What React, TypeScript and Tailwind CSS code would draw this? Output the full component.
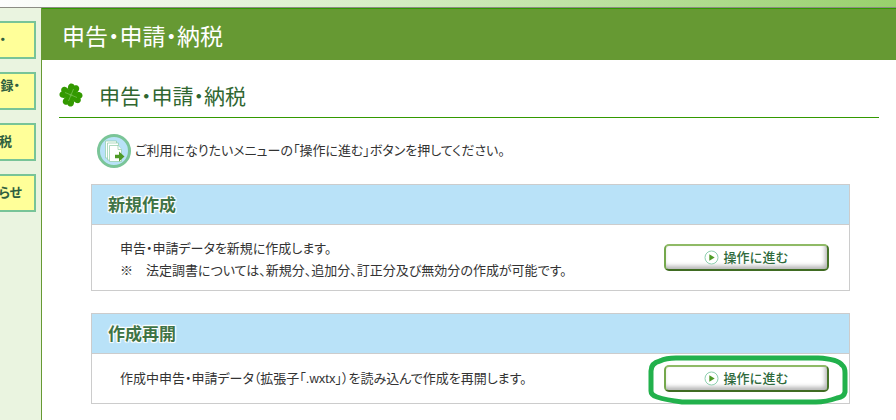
import React from "react";

interface MenuPanelProps {
  title: string;
  lines: string[];
  spacing: string;
  marked?: boolean;
}

const navItems = [
  { label: "・", place: "items-center pr-7" },
  { label: "録・", place: "items-start pt-1 pr-[14px]" },
  { label: "税", place: "items-center pr-[22px]" },
  { label: "らせ", place: "items-center pr-3" },
];

const CloverIcon: React.FC = () => (
  <svg width="24" height="26" viewBox="0 0 24 26" aria-hidden="true">
    <g fill="#339900">
      {[20, 110, 200, 290].map((angle) => (
        <path
          key={angle}
          d="M12 13C9.500 11 6 8.500 6.300 5C6.500 1.800 10.300 .800 12 3C13.700 .800 17.500 1.800 17.700 5C18 8.500 14.500 11 12 13Z"
          transform={`rotate(${angle} 12 13)`}
        />
      ))}
    </g>
    <path d="M14.500 7 9.500 19M6 10.500l12 5" stroke="#7cc35a" strokeWidth="0.700" fill="none" />
  </svg>
);

const DocumentsIcon: React.FC = () => (
  <svg width="34" height="34" viewBox="0 0 34 34" aria-hidden="true">
    <circle cx="17" cy="17" r="15.500" fill="#b9e2f8" stroke="#7ac598" strokeWidth="3" />
    <g fill="#fff" stroke="#8ccba5" strokeWidth="0.700">
      <path d="M8.500 7h11v17h-11z" />
      <path d="M10.500 9h11v17h-11z" />
      <path d="M12.500 11.500h8.500l3.500 4v12H12.500z" />
      <path d="M21 11.500v4h3.500" />
    </g>
    <path d="M18 20.800h4v-3.300l5.500 5-5.500 5v-3.300h-4z" fill="#4e9a26" />
  </svg>
);

const ProceedButton: React.FC = () => (
  <button
    type="button"
    className="flex h-[27px] w-[165px] cursor-pointer items-center justify-center gap-1 rounded-[5px] border-2 border-t-[#8fba66] border-r-[#47742a] border-b-[#3f6b22] border-l-[#74a84c] bg-white text-[13px] leading-5 font-medium text-[#2f6a3c] shadow-[inset_-2px_-3px_4px_#b5b5b5]"
  >
    <svg width="15" height="15" viewBox="0 0 15 15" aria-hidden="true">
      <circle cx="7.500" cy="7.500" r="6.500" fill="#fff" stroke="#8fd0b0" />
      <path d="M5.300 4.300v6.400l5.400-3.200z" fill="#4e9a26" />
    </svg>
    操作に進む
  </button>
);

const MenuPanel: React.FC<MenuPanelProps> = ({ title, lines, spacing, marked }) => {
  return (
    <section className="border border-[#cccccc]">
      <h3 className="border-b border-[#cccccc] bg-[#b9e2f8] px-4 pt-[9px] pb-[7px] text-[17px] leading-[23px] font-bold text-[#3f7446] [text-shadow:-1px_-1px_1px_#fff,1px_-1px_1px_#fff,-1px_1px_1px_#fff,1px_1px_1px_#fff,0_0_2px_#fff]">
        {title}
      </h3>
      <div className="flex items-center justify-between pr-5 pl-7">
        <div
          className={`text-[13px] leading-[22px] text-[#333333] [font-feature-settings:'palt'] ${spacing}`}
        >
          {lines.map((line) => (
            <p key={line}>{line}</p>
          ))}
        </div>
        <div className="relative my-[11px] shrink-0">
          <ProceedButton />
          {/* Hand drawn ring round the highlighted button */}
          {marked && (
            <svg
              className="pointer-events-none absolute -top-[10px] -left-4"
              width="200"
              height="50"
              viewBox="0 0 200 50"
              aria-hidden="true"
            >
              <path
                d="M28 3H170Q190 4 194 10Q197 12 197 18V37Q196 42 189 43Q178 47 168 47H34Q18 45 9 42Q3 40 3 36V16Q3 8 12 6Q18 3 28 3Z"
                fill="none"
                stroke="#22b14c"
                strokeWidth="5"
              />
            </svg>
          )}
        </div>
      </div>
    </section>
  );
};

const App: React.FC = () => {
  return (
    <div className="flex min-h-screen flex-col overflow-hidden bg-white font-['Liberation_Sans','Noto_Sans_CJK_JP',sans-serif]">
      <div className="h-2 border-b border-[#8c8c84] bg-linear-to-r from-[#fdfdfd] via-[#d3ecc0] via-45% to-[#98d06c]" />
      <div className="flex grow">
        <nav className="flex w-[42px] shrink-0 flex-col gap-[13px] border-r border-[#669933] bg-[#eaf4e0] pt-[13px] pr-[5px]">
          {navItems.map((item) => (
            <a
              key={item.label}
              href="#"
              className={`flex h-[38px] justify-end overflow-hidden border-2 border-l-0 border-[#78c498] bg-[#ffff99] text-[13px] leading-4 font-bold whitespace-nowrap text-[#2f6040] [font-feature-settings:'palt'] ${item.place}`}
            >
              {item.label}
            </a>
          ))}
        </nav>

        <main className="min-w-0 grow">
          <h1 className="border-t border-[#339900] bg-[#669933] px-5 pt-[14px] pb-[9px] text-[23px] leading-7 text-white [font-feature-settings:'palt']">
            申告・申請・納税
          </h1>

          <div className="px-[17px]">
            <div className="flex items-center gap-4 border-b border-[#339900] pt-5 pb-2">
              <CloverIcon />
              <h2 className="pt-1 text-[21px] leading-[25px] text-[#2f6630] [font-feature-settings:'palt']">
                申告・申請・納税
              </h2>
            </div>

            <div className="mr-[29px] ml-8">
              <div className="flex items-center gap-1 py-4 pl-[6px]">
                <DocumentsIcon />
                <p className="text-[13px] leading-[22px] text-[#333333] [font-feature-settings:'palt']">
                  ご利用になりたいメニューの「操作に進む」ボタンを押してください。
                </p>
              </div>

              <div className="flex flex-col gap-[22px]">
                <MenuPanel
                  title="新規作成"
                  spacing="pt-[13px] pb-2"
                  lines={[
                    "申告・申請データを新規に作成します。",
                    "※　法定調書については、新規分、追加分、訂正分及び無効分の作成が可能です。",
                  ]}
                />
                <MenuPanel
                  title="作成再開"
                  spacing="py-3"
                  lines={["作成中申告・申請データ（拡張子「.wxtx」）を読み込んで作成を再開します。"]}
                  marked
                />
              </div>
            </div>
          </div>
        </main>
      </div>
    </div>
  );
};

export default App;
